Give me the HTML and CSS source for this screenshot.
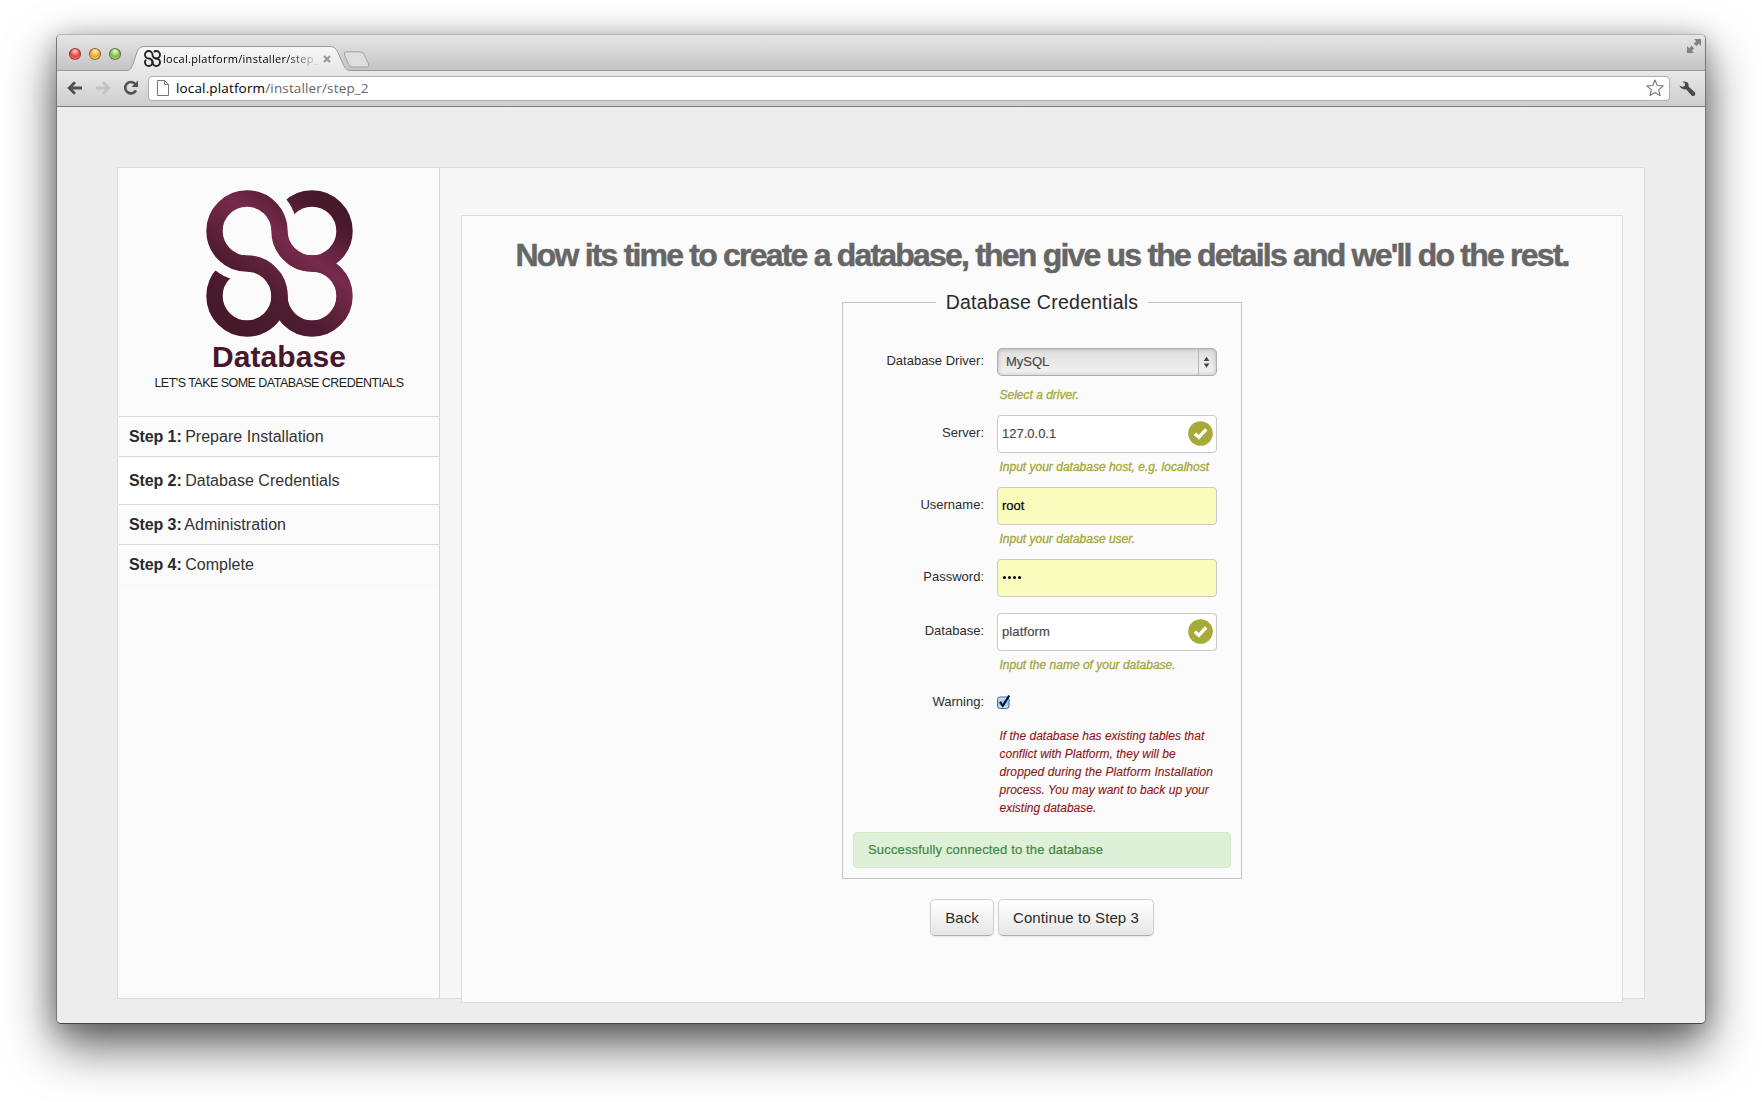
FILE: index.html
```
<!DOCTYPE html>
<html lang="en">
<head>
<meta charset="utf-8">
<title>Platform Installer</title>
<link rel="stylesheet" href="styles.css">
</head>
<body>
<svg width="0" height="0" class="defs">
  <defs>
    <linearGradient id="plum" gradientUnits="userSpaceOnUse" x1="30" y1="140" x2="124" y2="10">
      <stop offset="0" stop-color="#45182a"/>
      <stop offset=".3" stop-color="#4e1c31"/>
      <stop offset=".64" stop-color="#772a4b"/>
      <stop offset=".92" stop-color="#48192c"/>
      <stop offset="1" stop-color="#45182a"/>
    </linearGradient>
    <mask id="cut" maskUnits="userSpaceOnUse" x="0" y="0" width="147" height="147">
      <rect width="147" height="147" fill="#fff"/>
      <circle cx="41" cy="41" r="50.4" fill="#000"/>
    </mask>
    <g id="knot" fill="none" stroke-width="16.4">
      <path d="M41 8.5A32.5 32.5 0 0 1 73.5 41A32.5 32.5 0 0 0 106 73.5A32.5 32.5 0 1 1 73.5 106A32.5 32.5 0 0 0 41 73.5A32.5 32.5 0 1 1 41 8.5Z"/>
      <g mask="url(#cut)">
        <circle cx="106" cy="41" r="32.5"/>
        <circle cx="41" cy="106" r="32.5"/>
      </g>
    </g>
    <g id="ok">
      <circle cx="12.5" cy="12.5" r="12.3" fill="#a7a938"/>
      <path d="M6.9 12.6L10.8 16.4L18.2 8.4" fill="none" stroke="#fff" stroke-width="3.4"/>
    </g>
  </defs>
</svg>
<div class="window">
  <div class="titlebar">
    <div class="lights"><i class="red"></i><i class="amber"></i><i class="green"></i></div>
    <div class="tab">
      <svg class="tab-shape" width="228" height="26" viewBox="0 0 228 26"><defs><linearGradient id="tg" x2="0" y2="1"><stop stop-color="#f8f8f8"/><stop offset="1" stop-color="#e6e6e6"/></linearGradient></defs><path d="M0 24.5C5 24.5 6 23 8 18L12 6Q14 .5 19 .5H205Q210 .5 212.500 5.500L218 18C220 23 222 24.500 227 24.500V26H0Z" fill="url(#tg)"/><path d="M0 24.500C5 24.500 6 23 8 18L12 6Q14 .5 19 .5H205Q210 .5 212.500 5.500L218 18C220 23 222 24.500 227 24.500" fill="none" stroke="#999"/></svg>
      <svg class="favicon" width="17" height="17" viewBox="0 0 147 147"><use href="#knot" stroke="#222"/></svg>
      <span class="tab-title">local.platform/installer/step_</span>
      <svg class="close" width="8" height="8" viewBox="0 0 8 8"><path d="M1 1L7 7M7 1L1 7" stroke="#999" stroke-width="2.200"/></svg>
    </div>
    <svg class="newtab" width="28" height="17" viewBox="0 0 28 17"><path d="M3.500 .8H17Q20 .8 21.200 3.500L25.500 13Q26.500 16 24 16H9.500Q7 16 5.800 13.500L1.500 4Q.5 1 3.500 .8Z" fill="#dedede" stroke="#a2a2a2"/></svg>
    <svg class="full" width="14" height="14" viewBox="0 0 14 14" fill="#808080"><path d="M7 0H14V7L11.800 4.800L9.500 7.200L6.800 4.500L9.200 2.200Z"/><path d="M0 7V14H7L4.800 11.800L7.200 9.500L4.500 6.800L2.200 9.200Z"/></svg>
  </div>
  <div class="toolbar">
    <svg class="nav" width="16" height="14" viewBox="0 0 16 14"><path d="M15 7H3M8 1.200L2.200 7L8 12.800" fill="none" stroke="#505050" stroke-width="2.800"/></svg>
    <svg class="nav fwd" width="16" height="14" viewBox="0 0 16 14"><path d="M1 7H13M8 1.200L13.800 7L8 12.800" fill="none" stroke="#c2c2c2" stroke-width="2.800"/></svg>
    <svg class="nav reload" width="16" height="16" viewBox="0 0 16 16"><path d="M12.300 4A5.700 5.700 0 1 0 13 10.300" fill="none" stroke="#505050" stroke-width="2.600"/><path d="M15 .5V7H8.500Z" fill="#505050"/></svg>
    <div class="omnibox">
      <svg width="12" height="16" viewBox="0 0 12 16"><path d="M.5 .5H7.500L11.500 4.500V15.500H.5ZM7.500 .5V4.500H11.500" fill="#fff" stroke="#777"/></svg>
      <span class="url"><b>local.platform</b>/installer/step_2</span>
      <svg width="18" height="18" viewBox="0 0 18 18"><path d="M9 1L11.300 6.500L17.200 6.900L12.700 10.800L14.100 16.600L9 13.500L3.900 16.600L5.300 10.800L.8 6.900L6.700 6.500Z" fill="#fff" stroke="#777" stroke-width="1.100" stroke-linejoin="round"/></svg>
    </div>
    <svg class="wrench" width="17" height="16" viewBox="0 0 17 16"><path d="M3.200 .6Q8.500 -.4 9.600 3.200L9.500 5.500L15.800 11.300Q17 13 15.600 14.400Q14.200 15.700 12.600 14.600L7 8.300Q2 9 .4 4.600L3.600 6L6 4.600L5.800 2.200Z" fill="#4a4a4a"/></svg>
  </div>
  <div class="page">
    <div class="installer">
      <div class="sidebar">
        <div class="brand">
          <svg width="147" height="147" viewBox="0 0 147 147"><use href="#knot" stroke="url(#plum)"/></svg>
          <h2>Database</h2>
          <p>LET'S TAKE SOME DATABASE CREDENTIALS</p>
        </div>
        <ul class="steps">
          <li><strong>Step 1:</strong> Prepare Installation</li>
          <li class="active"><strong>Step 2:</strong> Database Credentials</li>
          <li><strong>Step 3:</strong> Administration</li>
          <li class="last"><strong>Step 4:</strong> Complete</li>
        </ul>
      </div>
      <div class="content">
        <div class="panel">
          <h1>Now its time to create a database, then give us the details and we'll do the rest.</h1>
          <fieldset>
            <legend>Database Credentials</legend>
            <div class="row driver">
              <label>Database Driver:</label>
              <div class="control">
                <div class="select"><span>MySQL</span><svg width="18" height="26" viewBox="0 0 18 26" fill="#444"><path d="M5 12L8 7.500L11 12ZM5 14.500L8 19L11 14.500Z"/></svg></div>
                <p class="help">Select a driver.</p>
              </div>
            </div>
            <div class="row">
              <label>Server:</label>
              <div class="control">
                <div class="input"><span>127.0.0.1</span><svg width="25" height="25"><use href="#ok"/></svg></div>
                <p class="help">Input your database host, e.g. localhost</p>
              </div>
            </div>
            <div class="row">
              <label>Username:</label>
              <div class="control">
                <div class="input filled"><span>root</span></div>
                <p class="help">Input your database user.</p>
              </div>
            </div>
            <div class="row short">
              <label>Password:</label>
              <div class="control">
                <div class="input filled"><span class="dots"><i></i><i></i><i></i><i></i></span></div>
              </div>
            </div>
            <div class="row">
              <label>Database:</label>
              <div class="control">
                <div class="input"><span class="wide">platform</span><svg width="25" height="25"><use href="#ok"/></svg></div>
                <p class="help">Input the name of your database.</p>
              </div>
            </div>
            <div class="row warning">
              <label>Warning:</label>
              <div class="control">
                <svg class="check" width="14" height="16" viewBox="0 0 14 16"><defs><linearGradient id="cb" x2="0" y2="1"><stop stop-color="#dcebf8"/><stop offset=".5" stop-color="#8fc0ee"/><stop offset="1" stop-color="#c4ecfb"/></linearGradient></defs><rect x=".5" y="3" width="11.500" height="11.500" rx="2.500" fill="url(#cb)" stroke="#48659a"/><path d="M3 8L5.800 11.800L12.200 1.500" fill="none" stroke="#07122a" stroke-width="2.200"/></svg>
                <p class="help danger">If the database has existing tables that<br>conflict with Platform, they will be<br><span class="loose">dropped during the Platform Installation</span><br>process. You may want to back up your<br>existing database.</p>
              </div>
            </div>
            <div class="alert">Successfully connected to the database</div>
          </fieldset>
          <div class="actions">
            <button class="back">Back</button>
            <button class="next">Continue to Step 3</button>
          </div>
        </div>
      </div>
    </div>
  </div>
</div>
</body>
</html>
```
FILE: styles.css
```
* { box-sizing: border-box; }
html, body { margin: 0; background: #fff; height: 1102px; overflow: hidden; }
body {
  padding: 34px 56px 0;
  font: 13px/18px "Liberation Sans", Arial, sans-serif;
  color: #333;
}
h1, h2, p, ul { margin: 0; padding: 0; }
.defs { position: absolute; }

.window {
  width: 1650px;
  height: 990px;
  border: 1px solid #777;
  border-top-color: #b4b4b4;
  border-bottom-color: #484848;
  border-radius: 5px;
  background: #ededed;
  box-shadow: 0 22px 50px rgba(0, 0, 0, .62), 0 4px 24px rgba(0, 0, 0, .24);
}

.titlebar {
  display: flex;
  height: 36px;
  border-bottom: 1px solid #999;
  border-radius: 4px 4px 0 0;
  background: linear-gradient(#e6e6e6, #c4c4c4);
}
.lights { display: flex; gap: 8px; padding: 13px 0 0 12px; }
.lights i {
  width: 12px;
  height: 12px;
  border-radius: 50%;
  border: 1px solid rgba(60, 30, 20, .55);
}
.red { background: radial-gradient(circle at 50% 25%, #fbb 5%, #e8403c 55%, #f99 100%); }
.amber { background: radial-gradient(circle at 50% 25%, #ffe9b8 5%, #f0a52c 55%, #ffe08a 100%); }
.green { background: radial-gradient(circle at 50% 25%, #dff5c8 5%, #78ba4c 55%, #c5f09c 100%); }

.tab {
  position: relative;
  display: flex;
  align-items: center;
  width: 228px;
  height: 26px;
  margin: 11px 0 0 4px;
  padding-left: 19px;
}
.tab-shape { position: absolute; left: 0; top: 0; }
.favicon, .tab-title, .close { position: relative; }
.favicon { flex: none; margin-top: -1px; }
.tab-title {
  width: 158px;
  margin: -1px 2px 0 2px;
  font: 11px/16px "Open Sans", sans-serif;
  letter-spacing: .3px;
  white-space: nowrap;
  color: transparent;
  background: linear-gradient(90deg, #000 78%, #999 92%, #ddd 98%);
  -webkit-background-clip: text;
  background-clip: text;
}
.newtab { margin: 16px 0 0 -10px; }
.full { margin: 4px 4px 0 auto; }

.toolbar {
  display: flex;
  align-items: center;
  height: 36px;
  padding-left: 10px;
  border-bottom: 1px solid #7d7d7d;
  background: linear-gradient(#e8e8e8, #cdcdcd);
}
.nav { margin-top: -1px; }
.fwd { margin-left: 12px; }
.reload { margin-left: 12px; }
.omnibox {
  display: flex;
  align-items: center;
  width: 1522px;
  height: 25px;
  margin-left: 9px;
  padding: 0 5px 0 8px;
  border: 1px solid #adadad;
  border-radius: 4px;
  background: #fff;
}
.omnibox svg { margin-top: -1px; }
.url {
  flex: 1;
  margin: -2px 0 0 7px;
  font: 13.5px/20px "Open Sans", sans-serif;
  letter-spacing: .15px;
  color: #666;
}
.url b { font-weight: 400; color: #000; }
.wrench { margin-left: 9px; }

.page { height: 916px; padding: 60px; }
.installer {
  display: flex;
  width: 1528px;
  height: 832px;
  border: 1px solid #dcdcdc;
  background: #f7f7f7;
}
.sidebar {
  width: 322px;
  padding-left: 1px;
  border-right: 1px solid #d8d8d8;
  background: #fbfbfb;
}
.brand {
  height: 249px;
  padding: 22px 0 0;
  border-bottom: 1px solid #d9d9d9;
  text-align: center;
}
.brand svg { display: block; margin: 0 auto; }
.brand h2 {
  margin-top: 5px;
  font-size: 30px;
  line-height: 30px;
  letter-spacing: .1px;
  color: #47182b;
}
.brand p {
  margin-top: 2px;
  font-size: 12.5px;
  letter-spacing: -.53px;
  color: #1d1d1d;
}
.steps { list-style: none; font-size: 16px; line-height: 39px; }
.steps li { padding-left: 10px; border-bottom: 1px solid #d9d9d9; letter-spacing: .03px; }
.steps strong { margin-right: -1px; letter-spacing: -.1px; color: #2a2a2a; }
.steps .active { line-height: 47px; background: #fff; }
.steps .last { border-bottom-color: #f8f8f8; }

.content { padding: 47px 0 0 21px; }
.panel {
  width: 1162px;
  height: 788px;
  padding-top: 21px;
  border: 1px solid #dadada;
  background: #fbfbfb;
}
h1 {
  font-size: 32px;
  line-height: 36px;
  letter-spacing: -1.8px;
  text-align: center;
  white-space: nowrap;
  color: #666;
  -webkit-text-stroke: .5px #666;
}
fieldset {
  width: 400px;
  height: 596px;
  margin: 10px auto 0;
  padding: 26px 10px 0;
  border: 1px solid #c4c4c4;
}
legend {
  margin: 0 auto;
  padding: 0 10px;
  font-size: 19.5px;
  line-height: 39px;
  letter-spacing: .26px;
  color: #2a2a2a;
}
.row {
  display: grid;
  grid-template-columns: 131px 220px;
  column-gap: 13px;
  height: 72px;
}
.row label { padding-top: 9px; text-align: right; color: #2c2c2c; }
.driver { height: 67px; }
.driver label { padding-top: 4px; }
.short { height: 54px; }
.warning { height: 147px; }
.warning label { padding-top: 8px; }

.input {
  display: flex;
  align-items: center;
  justify-content: space-between;
  height: 38px;
  padding: 0 3px 0 4px;
  border: 1px solid #c8c8c8;
  border-radius: 4px;
  background: #fff;
  color: #4a4a4a;
  -webkit-text-stroke: .2px;
}
.input span { margin-top: -1px; }
.input svg { margin-top: -1px; }
.input .wide { letter-spacing: .12px; }
.filled { background: #fafcbd; color: #000; }
.dots { display: flex; gap: 2px; padding-left: 1px; }
.dots i { width: 3px; height: 3px; border-radius: 50%; background: #000; }
.select {
  display: flex;
  justify-content: space-between;
  height: 28px;
  padding-left: 8px;
  border: 1px solid #adadad;
  border-radius: 5px;
  background: linear-gradient(#dedede, #f3f3f3);
  box-shadow: inset 0 0 4px rgba(0, 0, 0, .22);
  line-height: 26px;
  color: #4a4a4a;
  -webkit-text-stroke: .2px;
}
.select svg { border-left: 1px solid #b5b5b5; }
.help {
  margin: 5px 0 0 2.5px;
  font-size: 12px;
  font-style: italic;
  line-height: 18px;
  white-space: nowrap;
  color: #a6a837;
  -webkit-text-stroke: .3px;
}
.driver .help { margin-top: 10px; }
.check { display: block; margin-top: 9px; }
.warning .help { margin-top: 17px; }
.danger { letter-spacing: 0; color: #8c1413; -webkit-text-stroke: .1px; }
.loose { letter-spacing: .1px; }

.alert {
  height: 36px;
  padding-left: 14px;
  border: 1px solid #d2ebc4;
  border-radius: 4px;
  background: #dff0d8;
  line-height: 34px;
  letter-spacing: .16px;
  color: #3f8744;
  -webkit-text-stroke: .2px;
}
.actions { display: flex; justify-content: center; gap: 4px; margin-top: 20px; }
.actions button {
  height: 37px;
  padding: 0;
  border: 1px solid #d0d0d0;
  border-bottom-color: #adadad;
  border-radius: 5px;
  background: linear-gradient(#fff, #e6e6e6);
  box-shadow: 0 1px 2px rgba(0, 0, 0, .08);
  font: 15px/20px "Liberation Sans", Arial, sans-serif;
  letter-spacing: .1px;
  color: #2c2c2c;
}
.back { width: 64px; }
.next { width: 156px; }
```
